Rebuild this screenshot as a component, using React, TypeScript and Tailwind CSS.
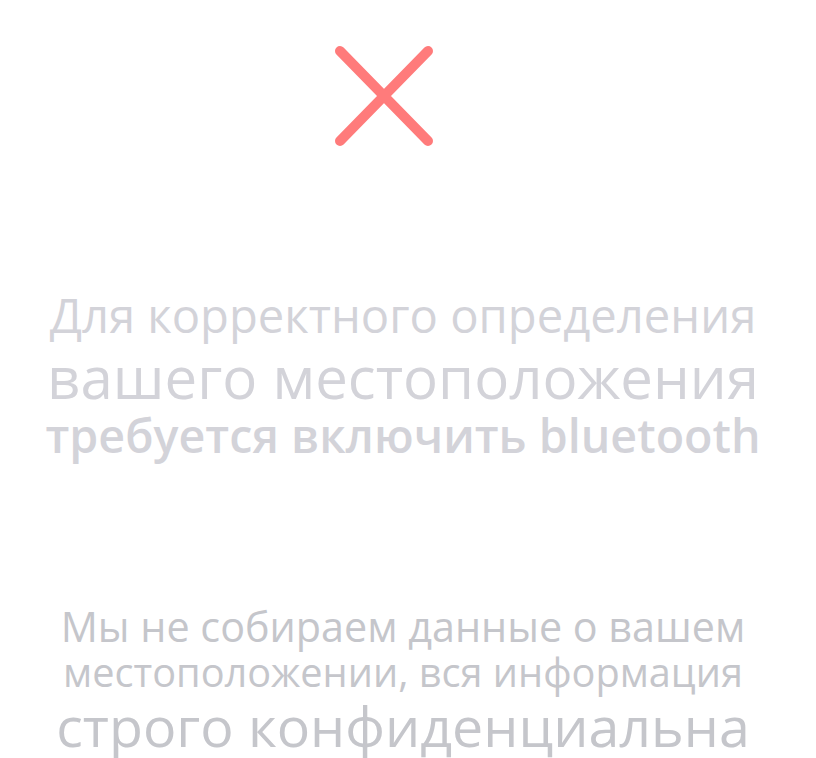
import React from 'react';

export default function App() {
  return (
    <div className="min-h-screen bg-white flex flex-col items-center pr-[10px] text-center font-['Open_Sans',sans-serif]">
      {/* Close mark */}
      <svg className="self-start ml-[334px] mt-[45px]" width="100" height="102" viewBox="0 0 100 102" fill="none">
        <path d="M6 6 L94 96 M94 6 L6 96" stroke="#ff7b7b" strokeWidth="10" strokeLinecap="round" />
      </svg>

      {/* Bluetooth notice */}
      <div className="mt-[140px] text-[#d3d3d9] font-normal whitespace-nowrap">
        <p className="text-[47.2px] leading-[56px]">Для корректного определения</p>
        <p className="text-[58.2px] leading-[68px]">вашего местоположения</p>
        <p className="text-[46.6px] leading-[48px] font-semibold">требуется включить bluetooth</p>
      </div>

      {/* Privacy */}
      <div className="mt-[143px] text-[#c5c6cb] font-normal whitespace-nowrap">
        <p className="text-[41.3px] leading-[48px]">Мы не собираем данные о вашем</p>
        <p className="text-[39.7px] leading-[45px]">местоположении, вся информация</p>
        <p className="text-[55.5px] leading-[62px]">строго конфиденциальна</p>
      </div>
    </div>
  );
}
